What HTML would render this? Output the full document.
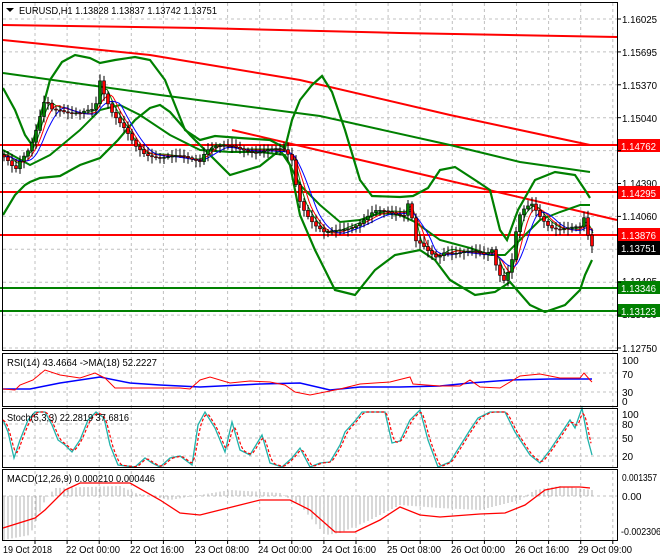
<!DOCTYPE html>
<html><head><meta charset="utf-8"><style>
html,body{margin:0;padding:0;background:#fff;width:660px;height:560px;overflow:hidden}
svg{display:block}
text{font-family:"Liberation Sans",sans-serif;font-size:10px;fill:#000}
</style></head><body>
<svg id="s" width="660" height="560" xmlns="http://www.w3.org/2000/svg">
<g id="grid" stroke="#c0c0c0" stroke-dasharray="3,3" stroke-width="1"></g>
<g id="plot"></g>
<g fill="none" stroke="#000" stroke-width="1">
<rect x="2.5" y="2.5" width="615" height="348"/>
<rect x="2.5" y="353.5" width="615" height="53"/>
<rect x="2.5" y="408.5" width="615" height="59"/>
<rect x="2.5" y="469.5" width="615" height="71"/>
</g>
<g>
<text x="622" y="23" textLength="35" lengthAdjust="spacingAndGlyphs">1.16025</text>
<text x="622" y="56" textLength="35" lengthAdjust="spacingAndGlyphs">1.15695</text>
<text x="622" y="89" textLength="35" lengthAdjust="spacingAndGlyphs">1.15370</text>
<text x="622" y="122" textLength="35" lengthAdjust="spacingAndGlyphs">1.15040</text>
<text x="622" y="187" textLength="35" lengthAdjust="spacingAndGlyphs">1.14390</text>
<text x="622" y="220" textLength="35" lengthAdjust="spacingAndGlyphs">1.14060</text>
<text x="622" y="352" textLength="35" lengthAdjust="spacingAndGlyphs">1.12750</text>
<text x="622" y="285" textLength="35" lengthAdjust="spacingAndGlyphs">1.13405</text>
<text x="622" y="318" textLength="35" lengthAdjust="spacingAndGlyphs">1.13080</text>
</g>
<g>
<rect x="618" y="139" width="42" height="13" fill="#ff0000"/><text x="621" y="150" textLength="35" lengthAdjust="spacingAndGlyphs" style="fill:#fff">1.14762</text>
<rect x="618" y="186" width="42" height="13" fill="#ff0000"/><text x="621" y="197" textLength="35" lengthAdjust="spacingAndGlyphs" style="fill:#fff">1.14295</text>
<rect x="618" y="228" width="42" height="13" fill="#ff0000"/><text x="621" y="239" textLength="35" lengthAdjust="spacingAndGlyphs" style="fill:#fff">1.13876</text>
<rect x="618" y="241" width="42" height="14" fill="#000"/><text x="621" y="252" textLength="35" lengthAdjust="spacingAndGlyphs" style="fill:#fff">1.13751</text>
<rect x="618" y="281" width="42" height="13" fill="#008000"/><text x="621" y="292" textLength="35" lengthAdjust="spacingAndGlyphs" style="fill:#fff">1.13346</text>
<rect x="618" y="304" width="42" height="13" fill="#008000"/><text x="621" y="315" textLength="35" lengthAdjust="spacingAndGlyphs" style="fill:#fff">1.13123</text>
<text x="622" y="364">100</text><text x="622" y="378">70</text><text x="622" y="396">30</text><text x="622" y="405">0</text>
<text x="622" y="418">100</text><text x="622" y="428">80</text><text x="622" y="442">50</text><text x="622" y="460">20</text>
<text x="622" y="481" textLength="35" lengthAdjust="spacingAndGlyphs">0.001357</text><text x="622" y="500">0.00</text><text x="621" y="535" textLength="40" lengthAdjust="spacingAndGlyphs">-0.002306</text>
</g>
<g id="ticks" stroke="#000"></g>
<path d="M6 8 L14 8 L10 12 Z" fill="#000"/>
<text x="19" y="14" textLength="198" lengthAdjust="spacingAndGlyphs">EURUSD,H1  1.13828 1.13837 1.13742 1.13751</text>
<text x="7" y="366" textLength="150" lengthAdjust="spacingAndGlyphs">RSI(14) 43.4664  -&gt;MA(18) 52.2227</text>
<text x="7" y="421" textLength="122" lengthAdjust="spacingAndGlyphs">Stoch(5,3,3) 22.2819 37.6816</text>
<text x="7" y="482" textLength="148" lengthAdjust="spacingAndGlyphs">MACD(12,26,9) 0.000210 0.000446</text>
<g>
<text x="3" y="553" textLength="49" lengthAdjust="spacingAndGlyphs">19 Oct 2018</text>
<text x="66" y="553" textLength="54" lengthAdjust="spacingAndGlyphs">22 Oct 00:00</text>
<text x="130" y="553" textLength="54" lengthAdjust="spacingAndGlyphs">22 Oct 16:00</text>
<text x="195" y="553" textLength="54" lengthAdjust="spacingAndGlyphs">23 Oct 08:00</text>
<text x="258" y="553" textLength="54" lengthAdjust="spacingAndGlyphs">24 Oct 00:00</text>
<text x="322" y="553" textLength="54" lengthAdjust="spacingAndGlyphs">24 Oct 16:00</text>
<text x="387" y="553" textLength="54" lengthAdjust="spacingAndGlyphs">25 Oct 08:00</text>
<text x="451" y="553" textLength="54" lengthAdjust="spacingAndGlyphs">26 Oct 00:00</text>
<text x="515" y="553" textLength="54" lengthAdjust="spacingAndGlyphs">26 Oct 16:00</text>
<text x="578" y="553" textLength="54" lengthAdjust="spacingAndGlyphs">29 Oct 09:00</text>
</g>
</svg>
<script>
var NS="http://www.w3.org/2000/svg";
function el(p,t,a){var e=document.createElementNS(NS,t);for(var k in a)e.setAttribute(k,a[k]);p.appendChild(e);return e;}
var G=document.getElementById('grid'),P=document.getElementById('plot'),T=document.getElementById('ticks');
for(var i=0;i<19;i++){var x=35+i*32.1;el(G,'line',{x1:x,y1:3,x2:x,y2:540});el(T,'line',{x1:x,y1:540,x2:x,y2:544});}
for(var i=0;i<11;i++){var y=19+i*32.9;el(G,'line',{x1:3,y1:y,x2:617,y2:y});el(T,'line',{x1:617,y1:y,x2:621,y2:y});}
[373,392,424,438,456,496].forEach(function(y){el(G,'line',{x1:3,y1:y,x2:617,y2:y});});
function pl(pts,c,w,d){var s=pts.map(function(p){return p[0]+','+p[1]}).join(' ');var a={points:s,fill:'none',stroke:c,'stroke-width':w||1};if(d)a['stroke-dasharray']=d;el(P,'polyline',a);}
function interp(pts,x){for(var i=1;i<pts.length;i++){if(x<=pts[i][0]){var a=pts[i-1],b=pts[i];return a[1]+(b[1]-a[1])*(x-a[0])/(b[0]-a[0]);}}return pts[pts.length-1][1];}
function smooth(pts,n,off){var r=[];for(var x=pts[0][0];x<=pts[pts.length-1][0];x+=2){var s=0,c=0;for(var k=0;k<n;k++){var xx=x-k*2;if(xx<pts[0][0])xx=pts[0][0];s+=interp(pts,xx);c++;}r.push([x,s/c+(off||0)]);}return r;}
pl([[0,145],[617,145]],'#ff0000',2);pl([[0,192],[617,192]],'#ff0000',2);pl([[0,235],[617,235]],'#ff0000',2);
pl([[0,288],[617,288]],'#008000',2);pl([[0,311],[617,311]],'#008000',2);
pl([[3,25],[200,28],[400,33],[617,37]],'#ff0000',2);
pl([[3,40],[150,55],[300,80],[450,115],[590,145]],'#ff0000',2);
pl([[232,130],[617,220]],'#ff0000',2);
pl([[3,73],[160,95],[320,116],[450,145],[520,162],[590,172]],'#008000',2);
var up=[[3,88],[15,110],[25,135],[32,145],[40,118],[50,80],[62,62],[75,55],[90,58],[100,63],[115,60],[135,57],[150,60],[165,80],[175,105],[185,130],[200,140],[215,136],[240,138],[270,140],[285,148],[292,120],[300,100],[312,85],[322,76],[332,92],[345,130],[360,180],[372,196],[400,197],[413,196],[428,188],[440,170],[455,167],[475,180],[490,190],[500,230],[507,240],[518,210],[535,180],[555,172],[575,175],[585,190],[590,198]];
var lo=[[3,215],[15,195],[25,185],[30,182],[40,178],[60,176],[80,165],[100,158],[118,140],[135,120],[150,108],[160,105],[170,112],[190,135],[210,155],[230,175],[260,166],[280,150],[290,165],[300,215],[315,250],[335,290],[355,295],[375,270],[395,255],[420,250],[435,260],[450,280],[475,295],[495,292],[510,282],[530,305],[545,312],[565,305],[580,290],[585,275],[592,260]];
var mid=[[3,150],[30,165],[50,155],[80,130],[100,110],[120,105],[140,115],[170,135],[200,150],[230,152],[260,152],[285,155],[300,185],[320,205],[340,222],[360,220],[380,213],[400,215],[415,222],[440,240],[470,248],[490,255],[505,255],[520,240],[540,220],[560,212],[580,205],[590,205]];
pl(up,'#008000',2.2);pl(lo,'#008000',2.2);pl(mid,'#008000',2);
var kp=[[3,155],[10,160],[15,168],[20,160],[30,150],[37,130],[45,100],[52,108],[60,108],[70,112],[80,115],[95,110],[100,80],[105,95],[112,110],[125,130],[135,148],[145,155],[160,155],[175,157],[190,160],[200,160],[206,148],[215,145],[230,148],[240,150],[255,150],[270,150],[285,152],[292,160],[298,195],[305,210],[315,225],[325,235],[335,232],[345,228],[360,222],[375,213],[390,212],[405,213],[410,195],[414,240],[420,245],[430,255],[437,258],[445,250],[460,252],[470,253],[485,255],[492,248],[498,270],[505,280],[512,260],[518,220],[525,210],[532,205],[540,215],[550,225],[560,230],[570,230],[580,228],[585,215],[589,240],[593,245]];
pl(smooth(kp,5,-1),'#008000',1);pl(smooth(kp,8,0),'#ff0000',1);pl(smooth(kp,12,1),'#0000ff',1);
var prev=interp(kp,3);
for(var x=4;x<=593;x+=4){var c=interp(kp,x)+Math.sin(x*1.7)*2.5;var o=prev;var hi=Math.min(o,c)-2-Math.abs(Math.sin(x*0.9))*5,lo2=Math.max(o,c)+2+Math.abs(Math.cos(x*1.3))*5;
el(P,'line',{x1:x,y1:hi,x2:x,y2:lo2,stroke:'#000','stroke-width':1});
var t=Math.min(o,c),h=Math.max(Math.abs(c-o),1);el(P,'rect',{x:x-1.5,y:t,width:3,height:h,fill:c<o?'#008000':'#ff0000',stroke:'#000','stroke-width':0.6});prev=c;}
var rsiMa=[[3,389],[30,389],[60,383],[100,377],[130,383],[160,385],[200,387],[260,384],[300,383],[330,390],[360,387],[400,387],[440,386],[470,383],[510,380],[550,379],[592,379]];
var rsi=[[3,389],[15,390],[20,385],[33,380],[45,370],[60,375],[80,378],[95,373],[105,378],[115,388],[140,388],[180,388],[190,389],[200,380],[210,377],[230,383],[250,381],[270,382],[285,385],[295,392],[310,395],[320,393],[340,389],[360,384],[390,382],[410,377],[413,384],[440,386],[460,386],[470,380],[480,387],[500,388],[520,376],[540,374],[560,378],[580,378],[584,373],[590,380],[592,382]];
pl(rsiMa,'#0000ff',1.5);pl(rsi,'#ff0000',1);
var st=[[3,420],[8,432],[14,458],[20,440],[28,420],[35,412],[45,412],[52,425],[58,440],[65,445],[72,452],[80,440],[88,420],[96,412],[104,418],[110,445],[118,465],[135,467],[145,458],[152,463],[160,467],[170,458],[180,456],[192,465],[198,425],[205,412],[215,428],[225,452],[232,422],[240,450],[250,455],[262,435],[270,463],[282,467],[292,458],[300,448],[310,467],[320,463],[330,462],[340,445],[345,432],[355,421],[362,412],[385,412],[392,443],[400,441],[410,420],[420,410],[428,440],[438,467],[450,462],[460,446],[470,430],[478,418],[490,412],[505,412],[515,432],[530,455],[540,463],[550,450],[570,420],[575,428],[582,408],[588,440],[592,455]];
pl(st,'#20b2aa',1.3);pl(smooth(st,3,0),'#ff0000',1.2,'3,2');
for(var x=4;x<=592;x+=4){var v=interp([[3,540],[30,535],[45,500],[55,488],[120,486],[135,493],[170,500],[230,490],[280,493],[300,505],[325,535],[340,533],[370,520],[400,505],[440,508],[480,510],[520,500],[535,490],[560,486],[592,490]],x);el(P,'line',{x1:x,y1:496,x2:x,y2:v,stroke:'#b0b0b0','stroke-width':1});}
pl([[3,528],[35,518],[45,510],[65,490],[80,483],[130,483],[160,500],[180,513],[200,515],[240,505],[260,500],[290,500],[310,510],[335,532],[355,532],[380,520],[400,507],[420,515],[440,517],[480,514],[505,513],[525,505],[545,490],[560,487],[580,487],[590,488]],'#ff0000',1.3);
</script>
</body></html>
